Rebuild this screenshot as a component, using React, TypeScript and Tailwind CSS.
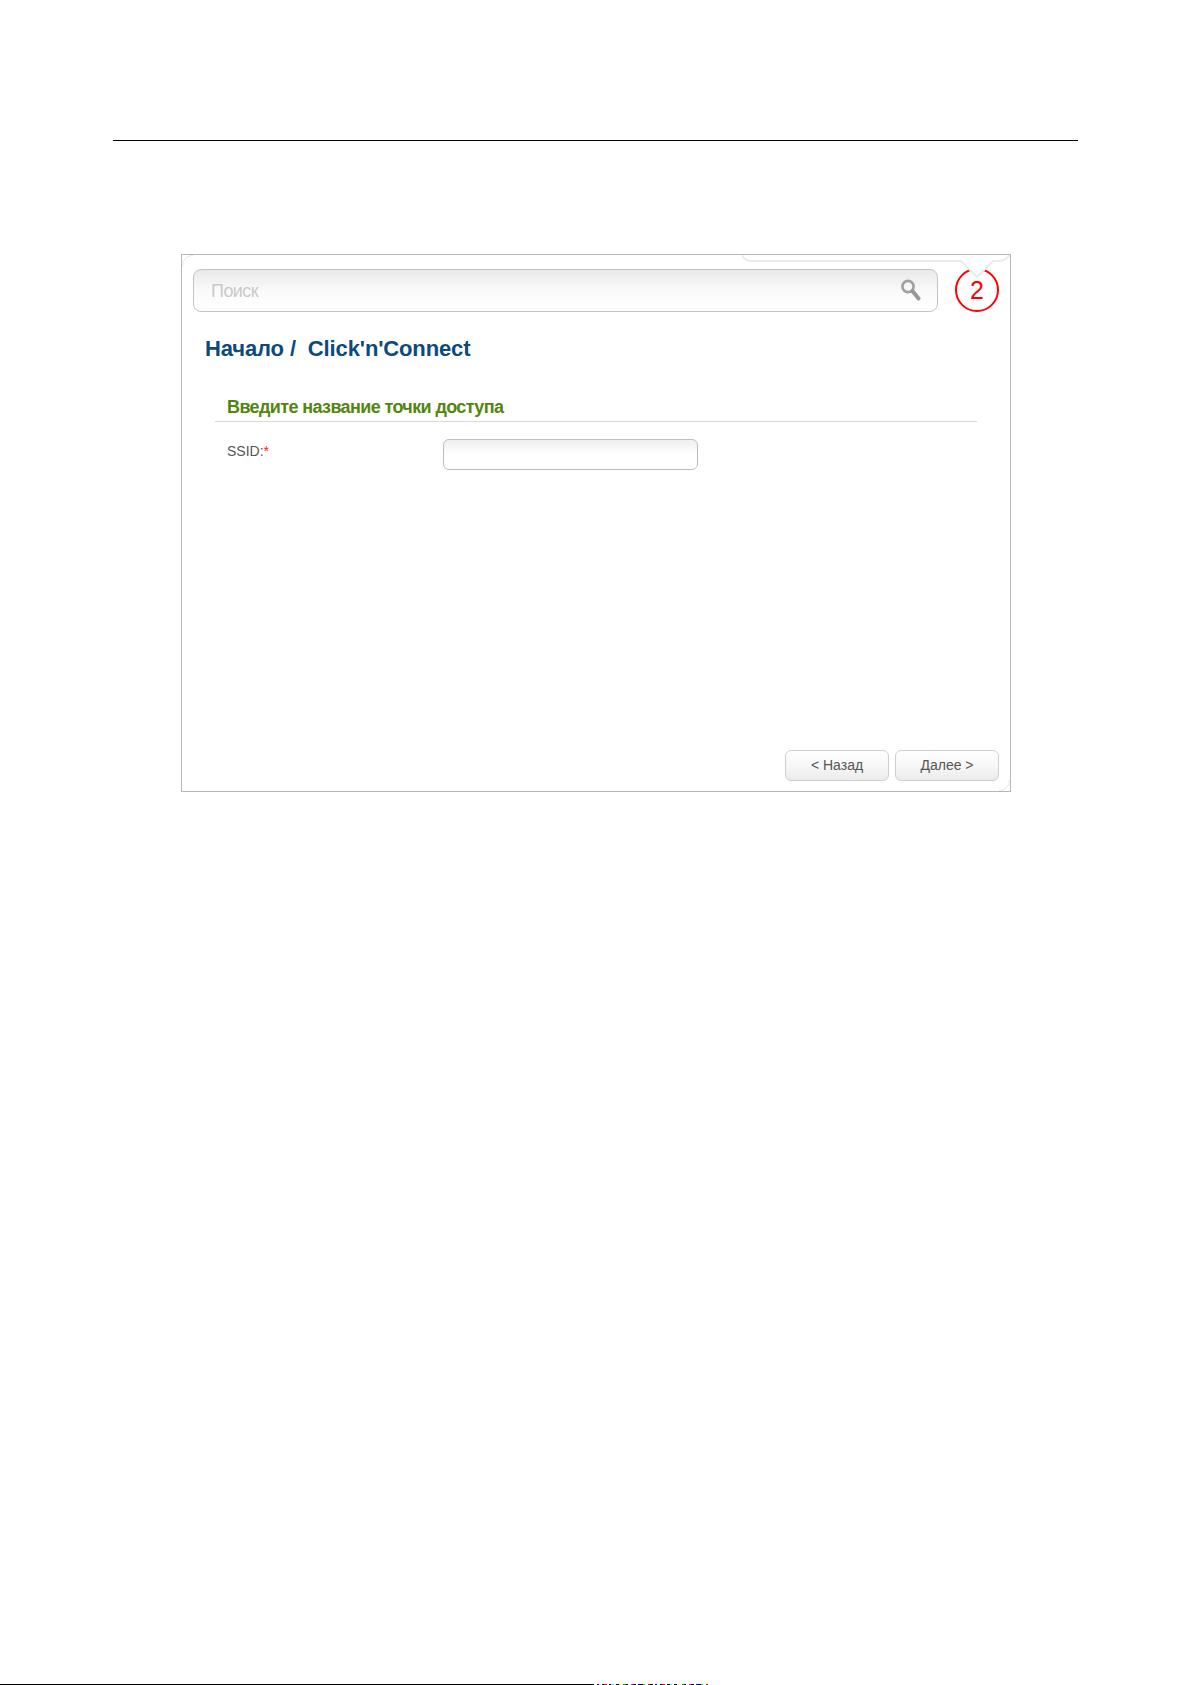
import { useState } from "react";

const font = "font-['Liberation_Sans',Arial,sans-serif]";

// noise at the very bottom edge of the page, left over from the scan
const noiseColors = [
  "#000", "#fff", "#00f", "#fff", "#000", "#f00", "#fff", "#000", "#0ff", "#fff", "#000", "#ff0",
  "#fff", "#0a0", "#000", "#fff", "#f0f", "#000", "#fff", "#00f", "#000", "#0f0", "#fff", "#f00",
];

function SearchIcon() {
  return (
    <svg width="22" height="26" viewBox="0 0 22 26" fill="none">
      <circle cx="8" cy="8.5" r="5.6" stroke="#a0a0a0" strokeWidth="2.6" />
      <path d="M12.5 13l6 7.5" stroke="#999999" strokeWidth="4" strokeLinecap="round" />
    </svg>
  );
}

function NavButton({ label }: { label: string }) {
  return (
    <button
      type="button"
      className="h-[31px] w-[104px] rounded-[6px] border border-[#cfcfcf] bg-gradient-to-b from-white via-[#f7f7f7] to-[#ececec] text-[14px] text-[#555]"
    >
      {label}
    </button>
  );
}

export default function App() {
  const [ssid, setSsid] = useState("");

  return (
    <div className={`${font} relative h-[1685px] w-[1191px] overflow-hidden bg-white pt-[140px]`}>
      <div className="ml-[113px] h-px w-[965px] bg-black" />

      <div className="relative ml-[181px] mt-[113px] h-[538px] w-[830px] border border-[#b5b7b8] bg-white px-[11px] pt-[14px]">
        <div className="flex h-[43px] w-[745px] items-center justify-between rounded-[8px] border border-[#c4c4c4] bg-gradient-to-b from-[#e9e9e9] via-[#fafafa] to-white pl-[17px] pr-[15px]">
          <span className="pt-[2px] text-[18px] tracking-[-0.55px] text-[#c9c9c9]">Поиск</span>
          <SearchIcon />
        </div>

        <h1 className="mt-[24px] whitespace-pre pl-[12px] text-[22px] font-bold leading-[26px] tracking-[-0.13px] text-[#0c4a7e]">
          Начало /  Click'n'Connect
        </h1>

        <div className="ml-[22px] mt-[34px] w-[762px]">
          <h2 className="border-b border-[#d9d9d9] pb-[3px] pl-[12px] text-[18px] font-bold leading-[22px] tracking-[-0.62px] text-[#528510]">
            Введите название точки доступа
          </h2>
          <div className="mt-[17px] flex items-center pl-[12px]">
            <label className="w-[216px] pb-[6px] text-[14px] text-[#555]">
              SSID:<span className="text-[#e8262a]">*</span>
            </label>
            <input
              value={ssid}
              onChange={(e) => setSsid(e.target.value)}
              className="h-[31px] w-[255px] rounded-[6px] border border-[#bdbdbd] bg-gradient-to-b from-[#efefef] via-white to-white outline-none"
            />
          </div>
        </div>

        <div className="absolute bottom-[10px] right-[11px] flex gap-[6px]">
          <NavButton label="< Назад" />
          <NavButton label="Далее >" />
        </div>

        {/* soft inner corners of the panel */}
        <svg className="absolute left-0 top-0" width="12" height="12" viewBox="0 0 12 12" fill="none">
          <path d="M0.5 11C0.5 5 5 0.5 11 0.5" stroke="#e4e4e4" />
        </svg>
        <svg className="absolute bottom-0 right-0" width="12" height="12" viewBox="0 0 12 12" fill="none">
          <path d="M11.5 1C11.5 7 7 11.5 1 11.5" stroke="#e4e4e4" />
        </svg>

        {/* callout number drawn over the screenshot, the tab notch sits on top of it */}
        <div className="absolute left-[773px] top-[13px] flex h-[44px] w-[44px] items-center justify-center rounded-full border-2 border-[#f00] text-[25px] leading-none text-[#f00]">
          2
        </div>
        <svg className="absolute left-[560px] top-0" width="268" height="26" viewBox="0 0 268 26" fill="none">
          <path d="M0 0C2 4 5 6 9 6H219L235 22L251 6H257C262 6 265 3 268 0Z" fill="#fff" />
          <path d="M0 0C2 4 5 6 9 6H219L235 22L251 6H257C262 6 265 3 268 0" stroke="#ebebeb" strokeWidth="2" />
        </svg>
      </div>

      <div className="absolute bottom-0 left-0 flex h-px w-[708px] bg-black">
        <div className="ml-[592px] flex w-[116px]">
          {noiseColors.concat(noiseColors).map((c, i) => (
            <span key={i} className="h-px flex-1" style={{ backgroundColor: c }} />
          ))}
        </div>
      </div>
    </div>
  );
}
